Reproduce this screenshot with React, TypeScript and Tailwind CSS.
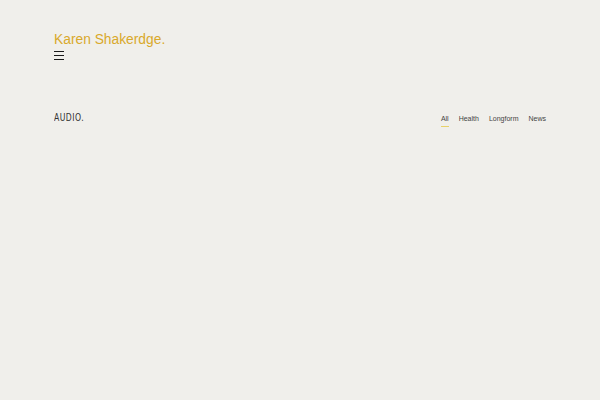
export default function App() {
  const filters = ["All", "Health", "Longform", "News"];

  return (
    <div className="min-h-screen w-full bg-[#f0efeb] font-['Liberation_Sans',sans-serif]">
      <header className="px-[54px] pt-[31px]">
        <h1 className="text-[13.8px] leading-[18px] text-[#d9a92c]">Karen Shakerdge.</h1>
        <button className="mt-[1px] flex flex-col gap-[3px] w-[10px] py-[1px]" aria-label="Menu">
          <span className="block h-[1px] w-[10px] bg-[#1a1a1a]" />
          <span className="block h-[1px] w-[10px] bg-[#1a1a1a]" />
          <span className="block h-[1px] w-[10px] bg-[#1a1a1a]" />
        </button>
      </header>

      <section className="mt-[49px] px-[54px] flex items-center justify-between">
        <h2 className="inline-block origin-left scale-x-[0.78] text-[11px] leading-[12px] tracking-[0.6px] text-[#333] font-['DejaVu_Sans',sans-serif] [font-stretch:condensed]">
          AUDIO.
        </h2>
        <nav className="flex items-center gap-[10px] pt-[4px]">
          {filters.map((f, i) => (
            <a key={f} className="relative text-[7px] leading-[10px] text-[#444] pb-[1px]">
              {f}
              {i === 0 && (
                <span className="absolute left-0 right-0 -bottom-[2px] h-[1px] bg-[#e7d16a]" />
              )}
            </a>
          ))}
        </nav>
      </section>
    </div>
  );
}
